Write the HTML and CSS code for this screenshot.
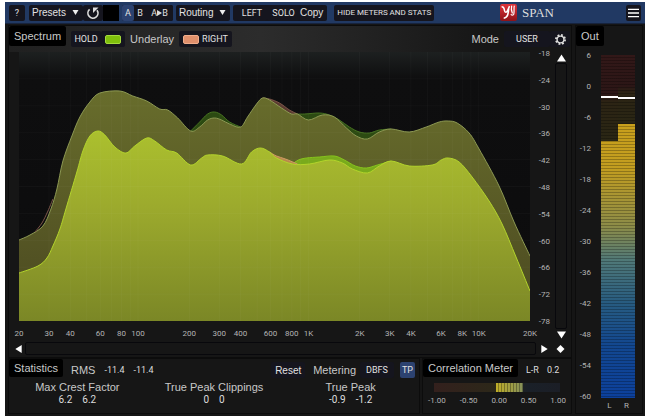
FILE: index.html
```html
<!DOCTYPE html>
<html lang="en">
<head>
  <meta charset="UTF-8">
  <meta name="viewport" content="width=device-width, initial-scale=1">
  <title>SPAN</title>
  <link rel="stylesheet" href="styles.css">
</head>
<body>
<div class="plugin">

  <!-- Toolbar -->
  <header class="toolbar">
    <button class="btn help">?</button>
    <label class="menu">
      <select class="presets" aria-label="Presets"><option>Presets</option></select>
      <svg class="arrow" viewBox="0 0 6 5"><path d="M0 0h6L3 5z"/></svg>
    </label>
    <button class="btn reload" aria-label="Reload">
      <svg viewBox="0 0 14 14"><path d="M3.600 3.400A5 5 0 1 0 11 4.200" fill="none" stroke="#ddd" stroke-width="1.700"/><path d="M7 7V1.500h5.500z" fill="#ddd"/></svg>
    </button>
    <span class="slot"></span>
    <div class="group">
      <button class="btn ab active">A</button>
      <button class="btn ab">B</button>
      <button class="btn copy-ab">A<svg viewBox="0 0 5 6"><path d="M0 0l5 3-5 3z"/></svg>B</button>
    </div>
    <label class="menu">
      <select class="routing" aria-label="Routing"><option>Routing</option></select>
      <svg class="arrow" viewBox="0 0 6 5"><path d="M0 0h6L3 5z"/></svg>
    </label>
    <div class="group channel">
      <button class="btn left">LEFT</button>
      <button class="btn solo">SOLO</button>
      <button class="btn sans">Copy</button>
    </div>
    <button class="btn hide">HIDE METERS AND STATS</button>
    <div class="brand">
      <svg viewBox="0 0 16 16">
        <defs><linearGradient id="logo" x1="0" y1="0" x2="0" y2="1"><stop offset="0" stop-color="#e0343a"/><stop offset="1" stop-color="#8e1218"/></linearGradient></defs>
        <rect width="16" height="16" rx="2" fill="url(#logo)"/>
        <path d="M1.500 2.500C3.500 2.500 4 4 4.200 6c0.300 2.300 2 2.300 3 0L9 2M8.200 4C8 9 7.500 13 3.500 13.500" fill="none" stroke="#fff" stroke-width="1.400"/>
        <path d="M11 1.500c-0.800 3-0.300 5 0.700 7.500M13.500 1.500c-0.800 3 0.200 5-0.500 8-0.500 1.500-2.500 1.200-2.700 0" fill="none" stroke="#fff" stroke-width="1.100"/>
      </svg>
      <span>SPAN</span>
    </div>
    <button class="btn burger" aria-label="Menu">
      <svg viewBox="0 0 12 10"><path d="M0 1h12M0 5h12M0 9h12" stroke="#fff" stroke-width="1.500"/></svg>
    </button>
  </header>

  <main class="content">
    <div class="analyzer">

      <!-- Spectrum -->
      <section class="panel spectrum">
        <div class="spectrum-head">
          <h2 class="tab">Spectrum</h2>
          <button class="btn hold">HOLD</button>
          <button class="btn color" aria-label="Spectrum color"><i class="swatch green"></i></button>
          <span class="label">Underlay</span>
          <button class="btn underlay"><i class="swatch coral"></i>RIGHT</button>
          <span class="label mode">Mode</span>
          <button class="btn user">USER</button>
          <button class="btn gear" aria-label="Settings">
            <svg viewBox="0 0 12 12"><circle cx="6" cy="6" r="5" fill="none" stroke="#ddd" stroke-width="2" stroke-dasharray="2 1.930"/><circle cx="6" cy="6" r="3.700" fill="none" stroke="#ddd" stroke-width="1.500"/></svg>
          </button>
        </div>
        <div class="plot-row">
          <div class="plot-col">
            <svg class="plot" viewBox="19 53 512 269" preserveAspectRatio="none">
              <defs>
                <linearGradient id="back" x1="0" y1="0" x2="0" y2="1"><stop offset="0" stop-color="#686d2c"/><stop offset="1" stop-color="#4a4820"/></linearGradient>
                <linearGradient id="front" gradientUnits="userSpaceOnUse" x1="0" y1="132" x2="0" y2="322"><stop offset="0" stop-color="#abc02e"/><stop offset="0.4" stop-color="#9caa2d"/><stop offset="1" stop-color="#7b8726"/></linearGradient>
              </defs>
              <g id="curves"></g>
              <g id="grid"></g>
            </svg>
            <div class="x-axis">
              <span>20</span><span>30</span><span>40</span><span>60</span><span>80</span><span>100</span><span>200</span><span>300</span><span>400</span><span>600</span><span>800</span><span>1K</span><span>2K</span><span>3K</span><span>4K</span><span>6K</span><span>8K</span><span>10K</span><span>20K</span>
            </div>
          </div>
          <div class="y-axis">
            <span>-18</span><span>-24</span><span>-30</span><span>-36</span><span>-42</span><span>-48</span><span>-54</span><span>-60</span><span>-66</span><span>-72</span><span>-78</span>
          </div>
          <div class="scroll-v">
            <button class="nub" aria-label="Up"><svg viewBox="0 0 10 8"><path d="M5 0l5 8H0z"/></svg></button>
            <div class="track"></div>
            <button class="nub" aria-label="Down"><svg viewBox="0 0 10 8"><path d="M0 0h10L5 8z"/></svg></button>
          </div>
        </div>
        <div class="scroll-h">
          <button class="nub" aria-label="Left"><svg viewBox="0 0 8 10"><path d="M8 0v10L0 5z"/></svg></button>
          <div class="track"></div>
          <button class="nub" aria-label="Right"><svg viewBox="0 0 8 10"><path d="M0 0l8 5-8 5z"/></svg></button>
          <button class="nub" aria-label="Reset view"><svg viewBox="0 0 10 10"><path d="M5 0l5 5-5 5-5-5z"/></svg></button>
        </div>
      </section>

      <div class="bottom">
        <!-- Statistics -->
        <section class="panel stats">
          <div class="stats-head">
            <h2 class="tab">Statistics</h2>
            <span class="small">RMS</span>
            <span class="num">-11.4</span><span class="num">-11.4</span>
            <button class="btn sans reset">Reset</button>
            <span class="small">Metering</span>
            <button class="btn dbfs">DBFS</button>
            <button class="btn tp active">TP</button>
          </div>
          <div class="stats-values">
            <div><p>Max Crest Factor</p><span>6.2</span><span>6.2</span></div>
            <div><p>True Peak Clippings</p><span>0</span><span>0</span></div>
            <div><p>True Peak</p><span>-0.9</span><span>-1.2</span></div>
          </div>
        </section>

        <!-- Correlation -->
        <section class="panel correlation">
          <div class="corr-head">
            <h2 class="tab">Correlation Meter</h2>
            <span class="num">L-R</span><span class="num">0.2</span>
          </div>
          <div class="corr-bar"><i class="corr-fill"></i></div>
          <div class="corr-scale"><span>-1.00</span><span>-0.50</span><span>0.00</span><span>0.50</span><span>1.00</span></div>
        </section>
      </div>
    </div>

    <!-- Output meter -->
    <section class="panel out">
      <h2 class="tab">Out</h2>
      <div class="out-body">
        <div class="out-scale">
          <span>6</span><span>0</span><span>-6</span><span>-12</span><span>-18</span><span>-24</span><span>-30</span><span>-36</span><span>-42</span><span>-48</span><span>-54</span><span>-60</span>
        </div>
        <div class="bars">
          <div class="bar bar-l"><i class="off"></i><i class="peak"></i></div>
          <div class="bar bar-r"><i class="off"></i><i class="peak"></i></div>
        </div>
      </div>
      <div class="out-names"><span>L</span><span>R</span></div>
    </section>
  </main>
</div>

<script>
  const NS = "http://www.w3.org/2000/svg";
  const curves = document.getElementById("curves");
  const grid = document.getElementById("grid");

  const hold = [[19,241],[30,236],[43,227],[51,210],[57,190],[63,162],[72,137],[80,118],[90,103],[100,94],[120,92],[133,97],[147,102],[160,110],[168,111],[178,119],[191,132],[200,128],[208,121],[215,119],[222,121],[230,125],[241,128],[248,118],[257,105],[263,99],[270,101],[282,109],[292,115],[298,115],[309,121],[323,116],[335,118],[347,129],[357,137],[368,140],[380,133],[392,130],[410,133],[427,128],[440,123],[449,122],[458,124],[470,134],[480,150],[500,187],[515,223],[531,257]];
  const level = [[19,274],[38,267],[47,259],[53,247],[60,230],[66,210],[77,173],[83,152],[90,137],[98,132],[105,136],[115,148],[126,154],[135,147],[147,139],[155,142],[167,151],[177,154],[191,166],[202,159],[208,156],[223,157],[242,165],[252,153],[261,149],[270,153],[277,159],[293,165],[310,165],[330,161],[343,164],[353,170],[368,174],[380,167],[392,162],[410,167],[433,166],[442,161],[449,159],[460,163],[473,178],[490,202],[503,225],[517,258],[531,292]];

  // parts where one channel rises above the other
  const holdLeft1 = [[191,132],[200,123],[208,115],[215,113],[222,116],[230,123],[241,128]];
  const holdLeft2 = [[292,115],[305,115],[320,114],[330,116],[340,121],[350,128],[360,133],[370,134],[380,131],[392,130]];
  const holdRight = [[263,99],[270,100],[280,104],[290,111],[298,115]];
  const holdRight2 = [[35,233],[42,224],[48,212],[53,200]];
  const levelLeft1 = [[293,165],[299,161],[307,159],[320,158],[335,157],[345,161],[356,167],[367,169],[378,166],[392,162]];
  const levelRight = [[270,153],[277,157],[286,160],[298,165]];

  // smooth line through the points
  function smooth(p) {
    let d = "M" + p[0];
    for (let i = 0; i < p.length - 1; i++) {
      const a = p[i - 1] || p[i], b = p[i], c = p[i + 1], e = p[i + 2] || c;
      d += "C" + [b[0] + (c[0] - a[0]) / 6, b[1] + (c[1] - a[1]) / 6,
                  c[0] - (e[0] - b[0]) / 6, c[1] - (e[1] - b[1]) / 6, c[0], c[1]];
    }
    return d;
  }

  function draw(parent, d, cls) {
    const path = document.createElementNS(NS, "path");
    path.setAttribute("d", d);
    path.setAttribute("class", cls);
    parent.appendChild(path);
  }

  function area(points, cls) {
    draw(curves, smooth(points) + `V322H${points[0][0]}Z`, cls + "-fill");
    draw(curves, smooth(points), cls + "-line");
  }

  area(holdLeft1, "dark");
  area(holdLeft2, "dark");
  area(holdRight, "rust");
  area(hold, "hold");
  draw(curves, smooth(holdRight2), "rust-line");
  area(levelLeft1, "lime");
  area(levelRight, "coral");
  area(level, "level");

  // log frequency lines
  for (const decade of [10, 100, 1000, 10000]) {
    for (let n = 1; n < 10; n++) {
      const f = decade * n;
      if (f <= 20 || f >= 20000) continue;
      const x = 19 + 512 * Math.log10(f / 20) / 3;
      draw(grid, `M${x.toFixed(1)} 53V322`, "grid-line");
    }
  }
  for (let i = 1; i < 10; i++) draw(grid, `M19 ${(53 + i * 26.9).toFixed(1)}H531`, "grid-line");
</script>
</body>
</html>
```
FILE: styles.css
```css
* {
  box-sizing: border-box;
}

body {
  margin: 0;
  padding: 2px 5px;
  background: #fff;
  font-family: "Liberation Sans", Arial, sans-serif;
  font-size: 11px;
  color: #c8c8c8;
}

svg {
  display: block;
}

h2, p {
  margin: 0;
  font-size: 11px;
  font-weight: normal;
}

.plugin {
  display: flex;
  flex-direction: column;
  min-height: calc(100vh - 4px);
  background: #151515;
}

/* buttons */
.btn {
  display: flex;
  align-items: center;
  justify-content: center;
  height: 16px;
  padding: 0;
  border: 0;
  border-radius: 2px;
  background: #15151e;
  color: #e2e2e2;
  font-family: Roboto, "Liberation Sans", sans-serif;
  font-size: 9px;
  white-space: nowrap;
}

.btn.sans {
  font-family: "Liberation Sans", sans-serif;
  font-size: 10px;
}

.btn.active {
  background: #2c4270;
}

/* toolbar */
.toolbar {
  display: flex;
  align-items: center;
  height: 22px;
  padding: 0 4px;
  background: #213963;
  border-bottom: 1px solid #17233c;
}

.help {
  width: 16px;
  margin-right: 4px;
}

.menu {
  display: flex;
  align-items: center;
  height: 16px;
  background: #15151e;
  border-radius: 2px;
}

.menu select {
  appearance: none;
  border: 0;
  padding: 0 0 0 3px;
  background: none;
  color: #e2e2e2;
  font-family: "Liberation Sans", sans-serif;
  font-size: 10px;
}

.presets,
.routing {
  width: 43px;
}

.arrow {
  width: 7px;
  height: 5px;
  margin-right: 4px;
  fill: #eee;
}

.reload {
  width: 20px;
}

.reload svg {
  width: 14px;
  height: 14px;
}

.slot {
  width: 16px;
  height: 16px;
  margin-right: 3px;
  background: #000;
}

.group {
  display: flex;
  margin-right: 3px;
  background: #15151e;
  border-radius: 2px;
}

.ab {
  width: 12px;
}

.copy-ab {
  width: 27px;
}

.copy-ab svg {
  width: 5px;
  height: 6px;
  fill: #ddd;
}

.channel {
  margin-left: 3px;
  padding: 0 4px;
  margin-right: 7px;
}

.left {
  width: 30px;
}

.solo {
  width: 33px;
}

.hide {
  padding: 0 3px;
  font-size: 8px;
}

.brand {
  display: flex;
  align-items: center;
  gap: 5px;
  margin-left: auto;
  margin-right: 72px;
  color: #ddd;
  font-family: "Liberation Serif", serif;
  font-size: 13px;
}

.brand svg {
  width: 17px;
  height: 17px;
}

.burger {
  width: 15px;
}

.burger svg {
  width: 11px;
  height: 10px;
}

/* layout */
.content {
  display: flex;
  flex: 1;
  padding: 1px 2px 2px 3px;
  gap: 3px;
}

.analyzer {
  display: flex;
  flex: 1;
  flex-direction: column;
  min-width: 0;
}

.panel {
  background: #161616;
  border: 1px solid #0c0c0c;
}

.tab {
  padding: 0 6px;
  background: #000;
  border-radius: 2px;
  line-height: 18px;
  white-space: nowrap;
}

/* spectrum */
.spectrum {
  display: flex;
  flex: 1;
  flex-direction: column;
}

.spectrum-head {
  display: flex;
  align-items: center;
  height: 26px;
  background: linear-gradient(90deg, #202020, #2c2c2c 45%, #161616 85%);
}

.spectrum-head .tab {
  align-self: flex-start;
  line-height: 20px;
  padding: 0 5px;
}

.hold {
  width: 30px;
  margin-left: 5px;
}

.color {
  width: 24px;
}

.swatch {
  width: 16px;
  height: 9px;
  border-radius: 2px;
}

.green {
  background: #7fbf0c;
  border: 1px solid #a4da3c;
}

.coral {
  background: #e0906c;
  border: 1px solid #f0ad8c;
}

.label {
  margin: 0 5px;
}

.underlay {
  gap: 3px;
  padding: 0 4px;
}

.mode {
  margin-left: auto;
}

.user {
  width: 46px;
}

.gear {
  width: 20px;
  margin-right: 1px;
}

.gear svg {
  width: 11px;
  height: 11px;
}

.plot-row {
  display: flex;
  flex: 1;
}

.plot-col {
  display: flex;
  flex: 1;
  flex-direction: column;
  min-width: 0;
  margin-left: 10px;
}

.plot {
  width: 100%;
  height: 0;
  min-height: 269px;
  flex: 1;
  background: linear-gradient(#1d2020, #0e0e0f 10%, #0c0c0d);
}

.hold-fill { fill: url(#back); }
.hold-line { fill: none; stroke: #8c9852; stroke-width: 1; }
.level-fill { fill: url(#front); }
.level-line { fill: none; stroke: #b3d42b; stroke-width: 1; }
.dark-fill { fill: #2c4a12; }
.dark-line { fill: none; stroke: #457020; }
.rust-fill { fill: #5a3a30; }
.rust-line { fill: none; stroke: #7c5548; }
.lime-fill { fill: #79aa1c; }
.lime-line { fill: none; stroke: #86c41c; }
.coral-fill { fill: #b98a4a; }
.coral-line { fill: none; stroke: #cf9c62; }

.grid-line {
  fill: none;
  stroke: #fff;
  stroke-opacity: 0.03;
}

/* one track per label gap, proportional to the log distance */
.x-axis {
  display: grid;
  grid-template-columns: 176fr 125fr 176fr 125fr 97fr 301fr 176fr 125fr 176fr 125fr 97fr 301fr 176fr 125fr 176fr 125fr 97fr 301fr 0;
  height: 19px;
  align-items: end;
}

.x-axis span {
  display: flex;
  justify-content: center;
  width: 0;
}

.x-axis,
.y-axis,
.out-scale,
.out-names,
.corr-scale {
  font-family: Roboto, "Liberation Sans", sans-serif;
  font-size: 8px;
  line-height: 12px;
  color: #b4b4b4;
}

.y-axis {
  display: flex;
  flex-direction: column;
  justify-content: space-between;
  align-items: flex-end;
  width: 20px;
  margin: -4px 4px 12px 0;
}

.scroll-v {
  display: flex;
  flex-direction: column;
  align-items: center;
  width: 14px;
  margin-right: 3px;
}

.nub {
  display: flex;
  align-items: center;
  justify-content: center;
  width: 13px;
  height: 11px;
  padding: 0;
  border: 0;
  background: none;
  fill: #fff;
}

.nub svg {
  width: 9px;
  height: 8px;
}

.track {
  flex: 1;
  background: #161616;
  border: 1px solid #08080c;
  border-radius: 2px;
}

.scroll-v .track {
  width: 12px;
}

.scroll-h {
  display: flex;
  align-items: center;
  height: 17px;
  padding: 0 4px 0 3px;
}

.scroll-h .track {
  height: 13px;
  margin-right: 2px;
}

.scroll-h .nub:last-child {
  margin-left: 3px;
}

/* bottom panels */
.bottom {
  display: flex;
  gap: 2px;
}

.stats {
  flex: 1;
  height: 56px;
}

.stats-head,
.corr-head {
  display: flex;
  align-items: center;
  height: 22px;
}

.stats-head .tab,
.corr-head .tab {
  align-self: flex-start;
  padding: 0 5px;
}

.num {
  font-family: Roboto, "Liberation Sans", sans-serif;
  font-size: 9px;
  color: #ddd;
  margin-left: 9px;
}

.corr-head .num {
  margin-left: 8px;
}

.small {
  margin-left: 8px;
}

.reset {
  width: 34px;
  margin-left: auto;
}

.dbfs {
  width: 34px;
  margin-left: 4px;
}

.tp {
  width: 15px;
  margin-left: 6px;
  margin-right: 4px;
}

.stats-values {
  display: flex;
  text-align: center;
  line-height: 12px;
}

.stats-values div {
  flex: 1;
}

.stats-values span {
  margin: 0 5px;
  font-family: Roboto, "Liberation Sans", sans-serif;
  font-size: 10px;
  color: #ddd;
}

.correlation {
  width: 150px;
}

.corr-bar {
  display: flex;
  height: 9px;
  margin: 2px 11px 3px;
  background: linear-gradient(90deg, #33201d, #2c2819 50%, #1a2028 75%, #1b1e26);
}

.corr-fill {
  width: 22%;
  margin-left: 49%;
  background: repeating-linear-gradient(90deg, transparent 0 2px, rgba(0, 0, 0, 0.3) 2px 3px), linear-gradient(90deg, #c0ae28, #85905a);
}

.corr-scale {
  display: flex;
  justify-content: space-between;
  padding: 0 5px;
}

/* output meter */
.out {
  display: flex;
  flex-direction: column;
  width: 68px;
}

.out .tab {
  align-self: flex-start;
  padding: 0 5px;
  line-height: 20px;
}

.out-body {
  display: flex;
  flex: 1;
  margin-top: 9px;
}

.out-scale {
  display: flex;
  flex-direction: column;
  justify-content: space-between;
  align-items: flex-end;
  width: 15px;
  margin: -5px 10px -5px 0;
}

.bars {
  display: flex;
  width: 34px;
}

.bar {
  display: flex;
  flex: 1;
  position: relative;
  background:
    repeating-linear-gradient(rgba(0, 0, 0, 0) 0 2px, rgba(0, 0, 0, 0.25) 2px 3px),
    linear-gradient(#c9a01c 20%, #c29d20 33%, #8c8c48 50%, #4f7878 60%, #285c80 72%, #124790 85%, #0c409c);
}

.off {
  width: 100%;
  height: 25%;
  background:
    repeating-linear-gradient(transparent 0 2px, rgba(0, 0, 0, 0.25) 2px 3px),
    linear-gradient(#321818, #2c1616 45%, #2c2414 55%, #2a2614);
}

.bar-r .off {
  height: 20%;
}

/* peak marker lies over the bar */
.peak {
  position: absolute;
  top: 12%;
  left: 0;
  right: 0;
  height: 2px;
  background: #fff;
}

.bar-r .peak {
  top: 42px;
}

.out-names {
  display: flex;
  justify-content: space-around;
  width: 34px;
  height: 15px;
  margin-left: 25px;
  padding-top: 2px;
}
```
